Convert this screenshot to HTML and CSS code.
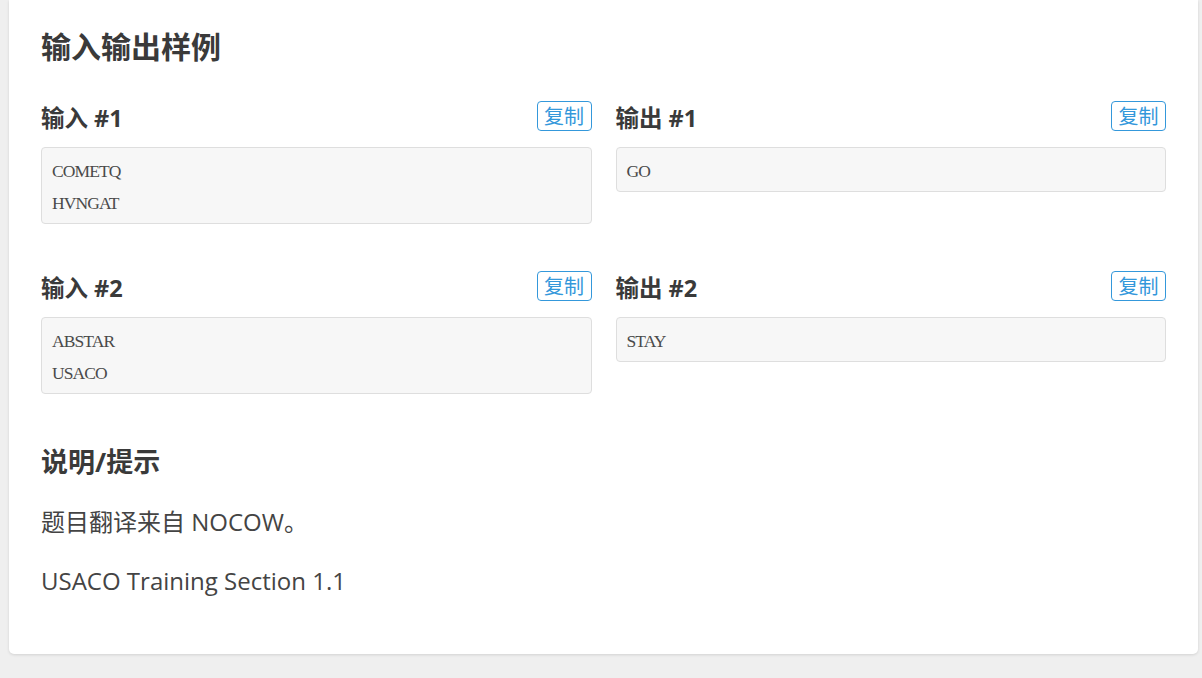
FILE: index.html
```html
<!DOCTYPE html>
<html lang="zh-CN">
<head>
<meta charset="utf-8">
<title>输入输出样例</title>
<link rel="stylesheet" href="styles.css">
</head>
<body>
<div class="page">
  <main class="card">
    <h2 class="section-title">输入输出样例</h2>
    <div class="samples">
      <div class="sample">
        <div class="sample-head"><h3>输入 #1</h3><button class="copy">复制</button></div>
        <pre class="code">COMETQ
HVNGAT</pre>
      </div>
      <div class="sample">
        <div class="sample-head"><h3>输出 #1</h3><button class="copy">复制</button></div>
        <pre class="code">GO</pre>
      </div>
      <div class="sample">
        <div class="sample-head"><h3>输入 #2</h3><button class="copy">复制</button></div>
        <pre class="code">ABSTAR
USACO</pre>
      </div>
      <div class="sample">
        <div class="sample-head"><h3>输出 #2</h3><button class="copy">复制</button></div>
        <pre class="code">STAY</pre>
      </div>
    </div>
    <h2 class="sub-title">说明/提示</h2>
    <p class="text">题目翻译来自 NOCOW。</p>
    <p class="text">USACO Training Section 1.1</p>
  </main>
</div>
</body>
</html>
```
FILE: styles.css
```css
html, body {
  margin: 0;
  padding: 0;
  background: #efefef;
}
body {
  font-family: "Open Sans", "Noto Sans CJK SC", sans-serif;
  color: #3c3c3c;
}
.page {
  padding: 0 4px 24px 9px;
}
.card {
  background: #fff;
  border-radius: 0 0 5px 5px;
  box-shadow: 0 1px 3px rgba(0, 0, 0, 0.12);
  padding: 24px 32px 55px 32px;
}
.section-title {
  margin: 0 0 32px;
  font-size: 30px;
  line-height: 45px;
  font-weight: 700;
  color: #3a3a3a;
}
.samples {
  display: grid;
  grid-template-columns: 1fr 1fr;
  column-gap: 24px;
  row-gap: 47px;
  align-items: start;
}
.sample-head {
  display: flex;
  align-items: center;
  justify-content: space-between;
  height: 30px;
  margin-bottom: 16px;
}
.sample-head h3 {
  margin: 0;
  font-size: 23.5px;
  line-height: 30px;
  font-weight: 700;
  color: #3a3a3a;
  position: relative;
  top: 2px;
}
.copy {
  font-family: "Noto Sans CJK SC", sans-serif;
  font-size: 20px;
  line-height: 28px;
  padding: 0 6.5px;
  border: 1px solid #3498db;
  border-radius: 4px;
  background: #fff;
  color: #3498db;
}
.code {
  margin: 0;
  background: #f7f7f7;
  border: 1px solid #dedede;
  border-radius: 4px;
  padding: 7px 10px 4px;
  font-family: "Liberation Serif", serif;
  font-size: 17.5px;
  letter-spacing: -0.9px;
  line-height: 32px;
  color: #4a4a4a;
}
.sub-title {
  margin: 48px 0 22px;
  font-size: 27px;
  line-height: 40px;
  font-weight: 700;
  color: #3a3a3a;
}
.text {
  margin: 0 0 23px;
  font-size: 24px;
  line-height: 36px;
  color: #444;
}
.text:last-child {
  margin-bottom: 0;
}
```
